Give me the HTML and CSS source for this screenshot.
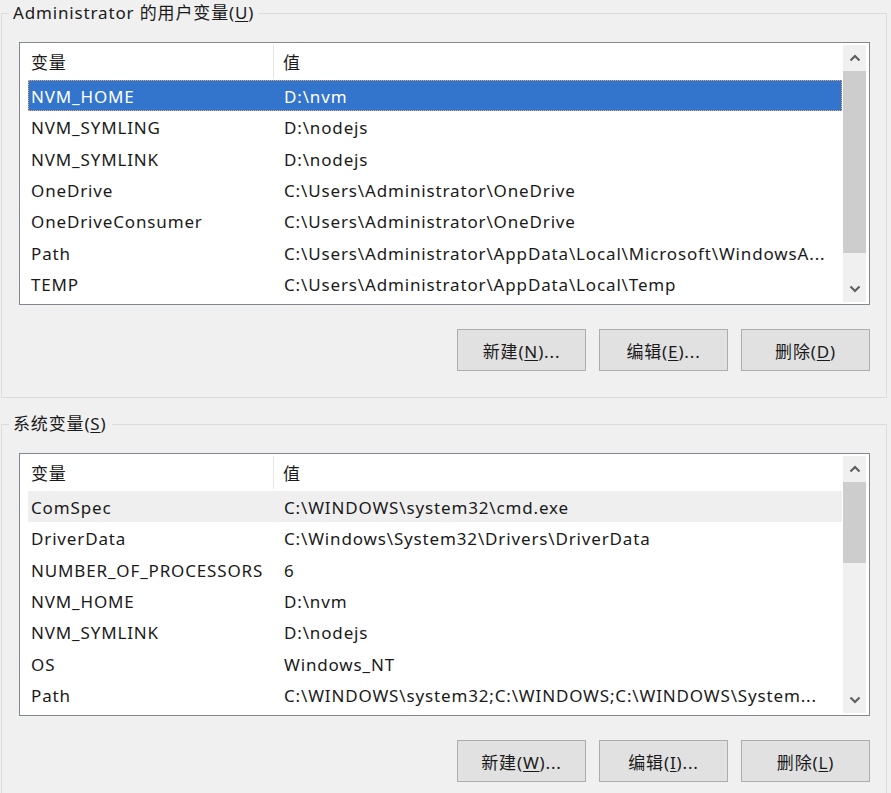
FILE: index.html
```html
<!doctype html>
<html>
<head>
	<meta charset="utf-8">
	<title>环境变量</title>
	<link rel="stylesheet" href="styles.css">
</head>
<body>
	<fieldset class="group">
		<legend>Administrator 的用户变量(<u>U</u>)</legend>
		<div class="group-body">
			<div class="list">
				<div class="view">
					<div class="head">
						<span class="col name">变量</span>
						<span class="col value">值</span>
					</div>
					<div class="row selected"><span class="col">NVM_HOME</span><span class="col">D:\nvm</span></div>
					<div class="row"><span class="col">NVM_SYMLING</span><span class="col">D:\nodejs</span></div>
					<div class="row"><span class="col">NVM_SYMLINK</span><span class="col">D:\nodejs</span></div>
					<div class="row"><span class="col">OneDrive</span><span class="col">C:\Users\Administrator\OneDrive</span></div>
					<div class="row"><span class="col">OneDriveConsumer</span><span class="col">C:\Users\Administrator\OneDrive</span></div>
					<div class="row"><span class="col">Path</span><span class="col">C:\Users\Administrator\AppData\Local\Microsoft\WindowsA...</span></div>
					<div class="row"><span class="col">TEMP</span><span class="col">C:\Users\Administrator\AppData\Local\Temp</span></div>
				</div>
				<div class="scrollbar">
					<div class="arrow"><svg width="12" height="8" viewBox="0 0 12 8"><polyline points="1.5,6.5 6,2 10.5,6.5" /></svg></div>
					<div class="track"><div class="thumb user"></div></div>
					<div class="arrow"><svg width="12" height="8" viewBox="0 0 12 8"><polyline points="1.5,1.5 6,6 10.5,1.5" /></svg></div>
				</div>
			</div>
			<div class="buttons">
				<button>新建(<u>N</u>)...</button>
				<button>编辑(<u>E</u>)...</button>
				<button>删除(<u>D</u>)</button>
			</div>
		</div>
	</fieldset>

	<fieldset class="group">
		<legend>系统变量(<u>S</u>)</legend>
		<div class="group-body">
			<div class="list">
				<div class="view">
					<div class="head">
						<span class="col name">变量</span>
						<span class="col value">值</span>
					</div>
					<div class="row hover"><span class="col">ComSpec</span><span class="col">C:\WINDOWS\system32\cmd.exe</span></div>
					<div class="row"><span class="col">DriverData</span><span class="col">C:\Windows\System32\Drivers\DriverData</span></div>
					<div class="row"><span class="col">NUMBER_OF_PROCESSORS</span><span class="col">6</span></div>
					<div class="row"><span class="col">NVM_HOME</span><span class="col">D:\nvm</span></div>
					<div class="row"><span class="col">NVM_SYMLINK</span><span class="col">D:\nodejs</span></div>
					<div class="row"><span class="col">OS</span><span class="col">Windows_NT</span></div>
					<div class="row"><span class="col">Path</span><span class="col">C:\WINDOWS\system32;C:\WINDOWS;C:\WINDOWS\System...</span></div>
				</div>
				<div class="scrollbar">
					<div class="arrow"><svg width="12" height="8" viewBox="0 0 12 8"><polyline points="1.5,6.5 6,2 10.5,6.5" /></svg></div>
					<div class="track"><div class="thumb system"></div></div>
					<div class="arrow"><svg width="12" height="8" viewBox="0 0 12 8"><polyline points="1.5,1.5 6,6 10.5,1.5" /></svg></div>
				</div>
			</div>
			<div class="buttons">
				<button>新建(<u>W</u>)...</button>
				<button>编辑(<u>I</u>)...</button>
				<button>删除(<u>L</u>)</button>
			</div>
		</div>
	</fieldset>
</body>
</html>
```

FILE: styles.css
```css
* {
	box-sizing: border-box;
}
body {
	margin: 0;
	width: 891px;
	height: 793px;
	overflow: hidden;
	background: #f0f0f0;
	color: #1a1a1a;
	font-family: "Noto Sans", "Noto Sans CJK SC", sans-serif;
	font-size: 17px;
	letter-spacing: 0.85px;
}
u {
	text-decoration-thickness: 1px;
	text-underline-offset: 2px;
}

.group {
	margin: 0 4px 0 1px;
	padding: 0;
	border: 1px solid #dcdcdc;
	min-width: 0;
}
.group + .group {
	margin-top: 13px;
}
.group > legend {
	margin-left: 7px;
	padding: 0 5px 0 4px;
	line-height: 26px;
	white-space: nowrap;
}
.group-body {
	padding: 16px 16px 26px 17px;
}

.list {
	display: flex;
	height: 263px;
	padding: 2px 3px 2px 8px;
	border: 1px solid #828790;
	background: white;
}
.view {
	flex: 1;
	min-width: 0;
	margin-top: -2px;
	white-space: nowrap;
	overflow: hidden;
}
.head {
	display: flex;
	height: 37px;
	align-items: center;
}
.head .col {
	display: flex;
	align-items: center;
	height: 33px;
}
.head .name {
	width: 246px;
	padding-left: 3px;
	border-right: 1px solid #e5e5e5;
}
.head .value {
	padding-left: 9px;
}
.row {
	display: flex;
	align-items: center;
	height: 31.33px;
}
.row .col {
	padding: 2px 0 0 3px;
	overflow: hidden;
}
.row .col:first-child {
	width: 253px;
	flex: none;
}
.row.selected {
	background: #3375cc;
	color: white;
	outline: 1px dotted #e9a86a;
	outline-offset: -1px;
}
.row.hover {
	background: #efefef;
}

.scrollbar {
	display: flex;
	flex-direction: column;
	width: 23px;
	margin-left: 1px;
	background: #f0f0f0;
}
.arrow {
	display: flex;
	align-items: center;
	justify-content: center;
	height: 26px;
	flex: none;
}
.arrow polyline {
	fill: none;
	stroke: #606060;
	stroke-width: 2.2;
}
.track {
	flex: 1;
}
.thumb {
	background: #cdcdcd;
}
.thumb.user {
	height: 182px;
}
.thumb.system {
	height: 81px;
}

.buttons {
	display: flex;
	justify-content: flex-end;
	gap: 13px;
	margin-top: 24px;
}
.buttons button {
	width: 129px;
	height: 42px;
	padding: 0;
	border: 1px solid #adadad;
	background: #e1e1e1;
	color: #1a1a1a;
	font: inherit;
	letter-spacing: inherit;
}
```
